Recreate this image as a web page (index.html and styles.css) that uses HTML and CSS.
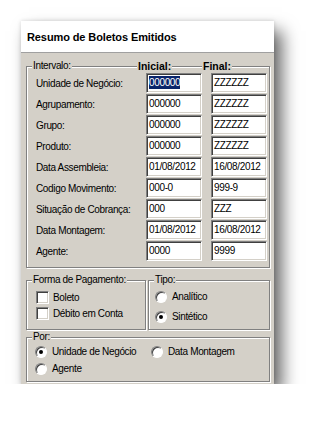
FILE: index.html
```html
<!doctype html>
<html lang="pt-BR">
<head>
    <meta charset="UTF-8">
    <title>Resumo de Boletos Emitidos</title>
    <link rel="stylesheet" href="styles.css">
</head>
<body>
<div class="window">
    <div class="title">Resumo de Boletos Emitidos</div>
    <div class="panel">
        <div class="group interval">
            <span class="cap cap-int">Intervalo:</span>
            <span class="cap cap-ini">Inicial:</span>
            <span class="cap cap-fin">Final:</span>
            <div class="rows">
                <span class="lbl">Unidade de Negócio:</span>
                <div class="field"><span class="sel">000000</span></div>
                <div class="field">ZZZZZZ</div>

                <span class="lbl">Agrupamento:</span>
                <div class="field">000000</div>
                <div class="field">ZZZZZZ</div>

                <span class="lbl">Grupo:</span>
                <div class="field">000000</div>
                <div class="field">ZZZZZZ</div>

                <span class="lbl">Produto:</span>
                <div class="field">000000</div>
                <div class="field">ZZZZZZ</div>

                <span class="lbl">Data Assembleia:</span>
                <div class="field">01/08/2012</div>
                <div class="field">16/08/2012</div>

                <span class="lbl">Codigo Movimento:</span>
                <div class="field">000-0</div>
                <div class="field">999-9</div>

                <span class="lbl">Situação de Cobrança:</span>
                <div class="field">000</div>
                <div class="field">ZZZ</div>

                <span class="lbl">Data Montagem:</span>
                <div class="field">01/08/2012</div>
                <div class="field">16/08/2012</div>

                <span class="lbl">Agente:</span>
                <div class="field">0000</div>
                <div class="field">9999</div>
            </div>
        </div>

        <div class="pair">
            <div class="group forma">
                <span class="cap">Forma de Pagamento:</span>
                <div class="opt"><span class="check"></span>Boleto</div>
                <div class="opt"><span class="check"></span>Débito em Conta</div>
            </div>
            <div class="group tipo">
                <span class="cap">Tipo:</span>
                <div class="opt"><span class="radio"></span>Analítico</div>
                <div class="opt"><span class="radio on"></span>Sintético</div>
            </div>
        </div>

        <div class="group por">
            <span class="cap">Por:</span>
            <div class="opt"><span class="radio on"></span>Unidade de Negócio</div>
            <div class="opt"><span class="radio"></span>Data Montagem</div>
            <div class="opt"><span class="radio"></span>Agente</div>
        </div>
    </div>
</div>
</body>
</html>
```

FILE: styles.css
```css
body {
    margin: 0;
    background: #fff;
    font-family: "Liberation Sans", Arial, sans-serif;
    font-size: 10px;
    letter-spacing: -0.35px;
    color: #000;
}

.window {
    margin: 21px 0 0 21px;
    width: 253px;
    box-shadow: 8px 10px 16px rgba(0, 0, 0, 0.6), 0 0 4px rgba(0, 0, 0, 0.15);
}

.title {
    height: 31px;
    background: #fff;
    border-bottom: 1px solid #a0a0a0;
    padding-left: 6px;
    display: flex;
    align-items: center;
    font-weight: bold;
    font-size: 11px;
    letter-spacing: -0.1px;
}

.panel {
    background: #d4d0c8;
    padding: 13px 4px 2px 5px;
}

.group {
    position: relative;
    border: 1px solid #808080;
    box-shadow: inset 1px 1px 0 #fff, 1px 1px 0 #fff;
}

.cap {
    position: absolute;
    top: -7px;
    left: 5px;
    line-height: 12px;
    padding: 0 1px;
    background: #d4d0c8;
    white-space: nowrap;
}

.cap-ini {
    left: 110px;
    font-weight: bold;
    font-size: 10.5px;
    letter-spacing: 0;
}

.cap-fin {
    left: 175px;
    font-weight: bold;
    font-size: 10.5px;
    letter-spacing: 0;
}

.interval {
    padding: 6px 0 6px 9px;
}

.rows {
    display: grid;
    grid-template-columns: 101px 56px 56px;
    grid-auto-rows: 20px;
    column-gap: 9px;
    row-gap: 1px;
    align-items: center;
}

.lbl {
    white-space: nowrap;
}

.field {
    height: 20px;
    box-sizing: border-box;
    background: #fff;
    border: 1px solid;
    border-color: #808080 #fff #fff #808080;
    box-shadow: inset 1px 1px 0 #404040, inset -1px -1px 0 #d4d0c8;
    padding-left: 2px;
    line-height: 18px;
    white-space: nowrap;
    overflow: hidden;
}

.sel {
    background: #0a246a;
    color: #fff;
    display: inline-block;
    line-height: 13px;
}

.pair {
    display: flex;
    gap: 2px;
    margin-top: 12px;
}

.forma {
    width: 120px;
    height: 50px;
    box-sizing: border-box;
    padding: 10px 0 0 9px;
    display: flex;
    flex-direction: column;
    gap: 3px;
}

.tipo {
    width: 122px;
    height: 50px;
    box-sizing: border-box;
    padding: 9px 0 0 6px;
    display: flex;
    flex-direction: column;
    gap: 7px;
}

.por {
    margin-top: 7px;
    padding: 7px 0 6px 8px;
    display: grid;
    grid-template-columns: 116px auto;
    row-gap: 4px;
}

.opt {
    display: flex;
    align-items: center;
    height: 13px;
    white-space: nowrap;
}

.check {
    width: 13px;
    height: 13px;
    box-sizing: border-box;
    background: #fff;
    border: 1px solid;
    border-color: #808080 #fff #fff #808080;
    box-shadow: inset 1px 1px 0 #404040, inset -1px -1px 0 #d4d0c8;
    margin-right: 4px;
}

.radio {
    position: relative;
    width: 12px;
    height: 12px;
    box-sizing: border-box;
    border-radius: 50%;
    background: #fff;
    border: 1px solid;
    border-color: #808080 #fff #fff #808080;
    box-shadow: inset 1px 1px 0 #404040;
    margin-right: 5px;
}

.radio.on::after {
    content: "";
    position: absolute;
    left: 3px;
    top: 3px;
    width: 4px;
    height: 4px;
    border-radius: 50%;
    background: #000;
}
```
